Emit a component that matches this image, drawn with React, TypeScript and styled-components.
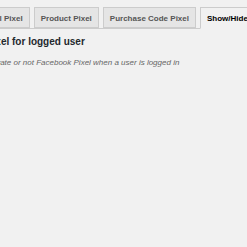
import React from 'react';
import styled, { createGlobalStyle } from 'styled-components';

const TABS = ['General Pixel', 'Product Pixel', 'Purchase Code Pixel', 'Show/Hide Pixel'];
const ACTIVE = 3;

const Global = createGlobalStyle`
  html, body {
    margin: 0;
    padding: 0;
    background: #f1f1f1;
    overflow: hidden;
  }
  body {
    width: 247px;
    height: 247px;
    font-family: "Liberation Sans", Arial, sans-serif;
  }
`;

const Page = styled.div`
  width: 400px;
  margin-left: -68px;
`;

const TabBar = styled.nav`
  display: flex;
  padding: 7px 0 0 29px;
  border-bottom: 1px solid #ccc;
`;

const Tab = styled.a<{ $active?: boolean }>`
  flex: none;
  margin-left: 4px;
  padding: 4px 6px 2px;
  font-size: 8px;
  line-height: 13px;
  font-weight: 700;
  white-space: nowrap;
  color: ${(p) => (p.$active ? '#000' : '#555')};
  background: ${(p) => (p.$active ? '#f1f1f1' : '#e5e5e5')};
  border: 1px solid #ccc;
  border-bottom-color: ${(p) => (p.$active ? '#f1f1f1' : '#ccc')};
  margin-bottom: ${(p) => (p.$active ? '-1px' : '0')};
`;

const Heading = styled.h3`
  margin: 7px 0 0;
  font-size: 10px;
  line-height: 12px;
  font-weight: 700;
  color: #23282d;
`;

const Description = styled.p`
  margin: 10px 0 0 13px;
  font-size: 8px;
  line-height: 10px;
  font-style: italic;
  color: #666;
`;

const App = () => {
  return (
    <>
      <Global />
      <Page>
        <TabBar>
          {TABS.map((t, i) => (
            <Tab key={t} $active={i === ACTIVE}>
              {t}
            </Tab>
          ))}
        </TabBar>
        <Heading>Show/Hide Pixel for logged user</Heading>
        <Description>Choose to activate or not Facebook Pixel when a user is logged in</Description>
      </Page>
    </>
  );
};

export default App;
